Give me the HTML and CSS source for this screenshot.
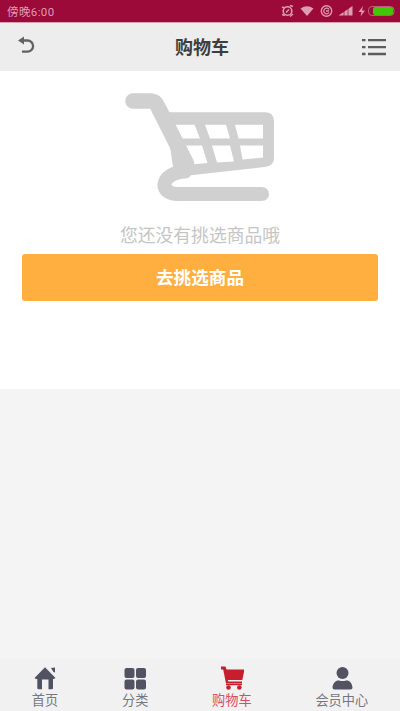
FILE: index.html
```html
<!DOCTYPE html>
<html lang="zh-CN">
<head>
<meta charset="utf-8">
<meta name="viewport" content="width=device-width, initial-scale=1">
<title>购物车</title>
<link rel="stylesheet" href="styles.css">
</head>
<body>
<div class="app">
  <div class="status">
    <span class="time">傍晚6:00</span>
    <svg class="status-icons" width="116" height="16" viewBox="0 0 116 16">
      <g fill="none" stroke="#df9bb4" stroke-width="1.6">
        <circle cx="7.500" cy="8" r="4.300"/>
        <path d="M2 4l3 1M10 2.500l3 1M2 11.500l3 1M10 13.500l3-2.500M6 9.500l3-3" stroke-width="1.500"/>
        <circle cx="46.500" cy="8" r="5.200" stroke-width="1.400"/>
        <path d="M49 6.500a2.800 2.800 0 1 0 0 3M46 8h3" stroke-width="1.300"/>
      </g>
      <g fill="#df9bb4">
        <path d="M20.500 5.500q6.500-4.500 13 0L27 13z"/>
        <path d="M58.500 12.500L72.500 3v9.500z"/>
        <path d="M83 3l-4.500 6h3l-1 4.500 4.500-6h-3z"/>
      </g>
      <path d="M64 3v10M68 3v10" stroke="#9b0a38" stroke-width=".7"/>
      <rect x="88.500" y="3.500" width="25.500" height="9" rx="3.500" fill="none" stroke="#c35a79"/>
      <rect x="93" y="4" width="20" height="8" rx="2" fill="#43c607"/>
    </svg>
  </div>
  <header class="header">
    <svg class="back" width="18" height="20" viewBox="0 0 18 20"><path d="M4 4.500h5.500a5.600 5.600 0 0 1 0 11.200H4" fill="none" stroke="#626262" stroke-width="2.300"/><path d="M0 4.500L6 .5v8z" fill="#626262"/></svg>
    <h1 class="title">购物车</h1>
    <svg class="menu" width="24" height="18" viewBox="0 0 24 18"><path d="M0 2.200h3.500M6 2.200h18M0 9.200h3.500M6 9.200h18M0 16h3.500M6 16h18" stroke="#5c5c5c" stroke-width="2.300"/></svg>
  </header>
  <main class="empty">
    <svg class="cart" width="150" height="110" viewBox="0 0 150 110">
      <path fill="#d0d0d0" fill-rule="evenodd" d="M8.500 0H26q9 0 14 11l4.500 8.500H141q8.500 0 8.500 9V47q0 7.500-8 8.500L58 65q-9 1-9 6.500T56 77.500L55.500 82.500 56 94.500H138q7 0 7 6.500t-7 7H50C27 108 26 79 49 72L23.500 15.500H8.500a7.700 7.700 0 0 1 0-15.500z" visibility="hidden"/>
      <path d="M8 8H26q4.500 0 7 6L61.500 70.500" fill="none" stroke="#d0d0d0" stroke-width="15.500" stroke-linecap="round" stroke-linejoin="round"/>
      <path fill="#d0d0d0" fill-rule="evenodd" d="M40 19.300H140q9 0 9 9V65q0 7.500-8 8.800L59 83 48 74zM47.500 31.700L54.500 45.500H75L69.500 31.700zM80 31.700L85 45.500H105L101 31.700zM110 31.700L113.500 45.500H138V31.700zM58 52.500L66 71.500 82.500 70 77 52.500zM87 52.500L92 69.500 109 68.500 105 52.500zM115 52.500L117.500 66.500 138 64.500V52.500z"/>
      <path d="M60 78.500C35 80 33 101 53 101H137" fill="none" stroke="#d0d0d0" stroke-width="14" stroke-linecap="round"/>
    </svg>
    <p class="message">您还没有挑选商品哦</p>
    <a class="shop" href="#">去挑选商品</a>
  </main>
  <nav class="tabs">
    <a class="tab" href="#"><svg width="24" height="24" viewBox="0 0 24 24" fill="#515262"><path d="M12 1.200L22.500 12l-1.700 1H20v9q0 1.200-1.200 1.200h-3.300V13.500H9v9.700H5.500q-1.200 0-1.200-1.200v-9H3l-1.500-1z"/><path d="M18 2l4-.500v5l-1.500-.5z"/></svg><span>首页</span></a>
    <a class="tab" href="#"><svg width="24" height="24" viewBox="0 0 24 24" fill="#515262"><rect x="1.500" y="2" width="10" height="10" rx="2"/><rect x="13" y="2" width="10" height="10" rx="2"/><rect x="1.500" y="13.500" width="10" height="10" rx="2"/><rect x="13" y="13.500" width="10" height="10" rx="2"/></svg><span>分类</span></a>
    <a class="tab active" href="#"><svg width="24" height="24" viewBox="0 0 24 24" fill="#c71e2e"><path d="M1 .5h4.500L6.500 3.500H24.500L22.300 14H7.800l.4 1.400H22v2.100H6L3.200 3.500H1z"/><path d="M6 18.500h16" stroke="#c71e2e" stroke-width="1.400"/><circle cx="8.500" cy="21.500" r="2.300"/><circle cx="19.300" cy="21.500" r="2.300"/></svg><span>购物车</span></a>
    <a class="tab" href="#"><svg width="24" height="24" viewBox="0 0 24 24" fill="#515262"><circle cx="12.500" cy="7" r="6"/><path d="M2.500 21.500C3 16 6.500 14 9 14.500q3.500 1.200 7 0c3-.5 6 2 6.500 7q0 2-2 2h-16q-2 0-2-2z"/></svg><span>会员中心</span></a>
  </nav>
</div>
</body>
</html>
```
FILE: styles.css
```css
* {
  box-sizing: border-box;
}

body {
  margin: 0;
  background: #f4f4f4;
  font-family: "Noto Sans CJK SC", sans-serif;
}

.app {
  display: flex;
  flex-direction: column;
  height: 711px;
}

.app a {
  text-decoration: none;
}

svg {
  display: block;
}

.status {
  display: flex;
  align-items: center;
  justify-content: space-between;
  height: 23px;
  padding: 0 4px 0 7px;
  background: #9b0a38;
  border-bottom: 1px solid #d8a0b2;
}

.time {
  color: #df9bb4;
  font-family: Roboto, "Noto Sans CJK SC", sans-serif;
  font-size: 11.500px;
  letter-spacing: 0.400px;
  line-height: 22px;
  padding-top: 2px;
}

.header {
  display: flex;
  align-items: center;
  justify-content: space-between;
  height: 48px;
  padding: 0 14px 0 18px;
  background: #ededed;
}

.title {
  margin: 0 0 2px 6px;
  color: #3e3e3e;
  font-size: 18px;
  line-height: 26px;
}

.back {
  margin-bottom: 2px;
}

.empty {
  display: flex;
  flex-direction: column;
  align-items: center;
  height: 318px;
  padding: 22px 22px 0;
  background: #fff;
}

.message {
  margin: 17px 0 5px;
  color: #c5c5c5;
  font-size: 17.800px;
  line-height: 29px;
}

.shop {
  align-self: stretch;
  height: 47px;
  border-radius: 3px;
  background: #ffaf3f;
  color: #fff;
  font-size: 17.600px;
  font-weight: 700;
  line-height: 45px;
  text-align: center;
}

.tabs {
  display: flex;
  justify-content: space-around;
  height: 53px;
  margin-top: auto;
  padding-top: 8px;
  background: #f1f1f1;
}

.tab {
  display: flex;
  flex-direction: column;
  align-items: center;
  color: #777782;
  font-size: 13.200px;
  line-height: 19px;
}

.active {
  color: #d64f61;
}
```
